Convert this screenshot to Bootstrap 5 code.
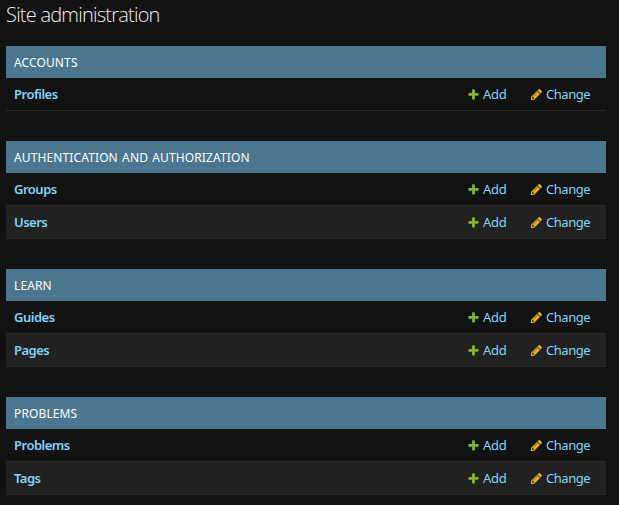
<!DOCTYPE html>
<html lang="en">
<head>
<meta charset="utf-8">
<meta name="viewport" content="width=device-width, initial-scale=1">
<title>Site administration</title>
<link href="https://cdn.jsdelivr.net/npm/bootstrap@5.3.0/dist/css/bootstrap.min.css" rel="stylesheet">
<style>
  body { background: #121212; color: #eee; font: 13px/17px "Segoe UI", "Noto Sans", "Open Sans", sans-serif; overflow: hidden; }
  .admin-main { width: 600px; margin-left: 6px; padding-top: 3px; }
  .page-title { font-family: "Segoe UI", "Open Sans", sans-serif; font-size: 20px; font-weight: 300; line-height: 24px; letter-spacing: -.78px; margin-bottom: 19px; color: #eee; }
  .app-module { margin-bottom: 30px; }
  .app-caption { height: 32px; padding: 2px 8px 0; background: #4b7690; color: #fff; font-size: 12px; font-weight: 400; letter-spacing: .12px; word-spacing: 1px; text-transform: uppercase; margin: 0; }
  .model-row { height: 33px; padding: 0 8px; border-bottom: 1px solid #2a2a2a; }
  .model-row:nth-of-type(even) { background: #212121; }
  .model-row a { color: #81d4fa; }
  .model-name { font-weight: 600; letter-spacing: -.5px; }
  .add-link { width: 63px; letter-spacing: -.3px; }
  .change-link { width: 68px; letter-spacing: -.45px; }
  .model-row svg { width: 13px; height: 13px; margin-right: 3px; flex: none; }
</style>
</head>
<body>
<svg class="d-none" aria-hidden="true">
  <symbol id="plus" viewBox="0 0 1792 1792"><path fill="#83b735" d="M1600 796v192q0 40-28 68t-68 28h-416v416q0 40-28 68t-68 28h-192q-40 0-68-28t-28-68v-416h-416q-40 0-68-28t-28-68v-192q0-40 28-68t68-28h416v-416q0-40 28-68t68-28h192q40 0 68 28t28 68v416h416q40 0 68 28t28 68z"/></symbol>
  <symbol id="pencil" viewBox="0 0 1792 1792"><path fill="#e8b022" d="M491 1536l91-91-235-235-91 91v107h128v128h107zm523-928q0-22-22-22-10 0-17 7l-542 542q-7 7-7 17 0 22 22 22 10 0 17-7l542-542q7-7 7-17zm-54-192l416 416-832 832h-416v-416zm683 96q0 53-37 90l-166 166-416-416 166-165q36-38 90-38 53 0 91 38l235 234q37 39 37 91z"/></symbol>
</svg>
<main class="admin-main">
  <h1 class="page-title">Site administration</h1>

  <section class="app-module">
    <h2 class="app-caption d-flex align-items-center">Accounts</h2>
    <div class="model-row d-flex align-items-center">
      <a href="#" class="model-name me-auto text-decoration-none">Profiles</a>
      <a href="#" class="add-link d-flex align-items-center text-decoration-none"><svg><use href="#plus"/></svg>Add</a>
      <a href="#" class="change-link d-flex align-items-center text-decoration-none"><svg><use href="#pencil"/></svg>Change</a>
    </div>
  </section>

  <section class="app-module">
    <h2 class="app-caption d-flex align-items-center">Authentication and Authorization</h2>
    <div class="model-row d-flex align-items-center">
      <a href="#" class="model-name me-auto text-decoration-none">Groups</a>
      <a href="#" class="add-link d-flex align-items-center text-decoration-none"><svg><use href="#plus"/></svg>Add</a>
      <a href="#" class="change-link d-flex align-items-center text-decoration-none"><svg><use href="#pencil"/></svg>Change</a>
    </div>
    <div class="model-row d-flex align-items-center">
      <a href="#" class="model-name me-auto text-decoration-none">Users</a>
      <a href="#" class="add-link d-flex align-items-center text-decoration-none"><svg><use href="#plus"/></svg>Add</a>
      <a href="#" class="change-link d-flex align-items-center text-decoration-none"><svg><use href="#pencil"/></svg>Change</a>
    </div>
  </section>

  <section class="app-module">
    <h2 class="app-caption d-flex align-items-center">Learn</h2>
    <div class="model-row d-flex align-items-center">
      <a href="#" class="model-name me-auto text-decoration-none">Guides</a>
      <a href="#" class="add-link d-flex align-items-center text-decoration-none"><svg><use href="#plus"/></svg>Add</a>
      <a href="#" class="change-link d-flex align-items-center text-decoration-none"><svg><use href="#pencil"/></svg>Change</a>
    </div>
    <div class="model-row d-flex align-items-center">
      <a href="#" class="model-name me-auto text-decoration-none">Pages</a>
      <a href="#" class="add-link d-flex align-items-center text-decoration-none"><svg><use href="#plus"/></svg>Add</a>
      <a href="#" class="change-link d-flex align-items-center text-decoration-none"><svg><use href="#pencil"/></svg>Change</a>
    </div>
  </section>

  <section class="app-module">
    <h2 class="app-caption d-flex align-items-center">Problems</h2>
    <div class="model-row d-flex align-items-center">
      <a href="#" class="model-name me-auto text-decoration-none">Problems</a>
      <a href="#" class="add-link d-flex align-items-center text-decoration-none"><svg><use href="#plus"/></svg>Add</a>
      <a href="#" class="change-link d-flex align-items-center text-decoration-none"><svg><use href="#pencil"/></svg>Change</a>
    </div>
    <div class="model-row d-flex align-items-center">
      <a href="#" class="model-name me-auto text-decoration-none">Tags</a>
      <a href="#" class="add-link d-flex align-items-center text-decoration-none"><svg><use href="#plus"/></svg>Add</a>
      <a href="#" class="change-link d-flex align-items-center text-decoration-none"><svg><use href="#pencil"/></svg>Change</a>
    </div>
  </section>
</main>
<script src="https://cdn.jsdelivr.net/npm/bootstrap@5.3.0/dist/js/bootstrap.bundle.min.js"></script>
</body>
</html>
